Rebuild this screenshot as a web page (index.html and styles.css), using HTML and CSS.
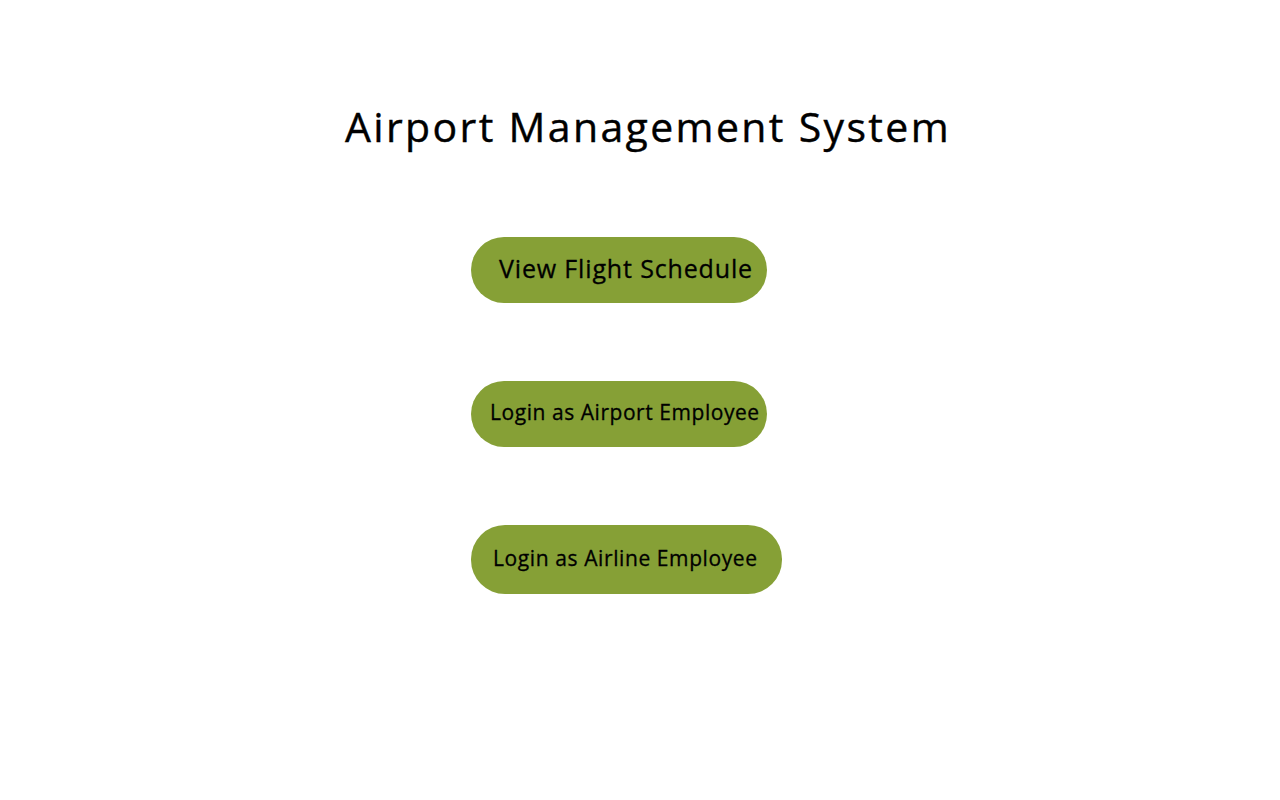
FILE: index.html
```html
<!DOCTYPE html>
<html lang="en">
<head>
<meta charset="utf-8">
<title>Airport Management System</title>
<link rel="stylesheet" href="styles.css">
</head>
<body>
<main class="page">
  <h1 class="title">Airport Management System</h1>
  <nav class="menu">
    <button class="btn btn-schedule">View Flight Schedule</button>
    <button class="btn btn-airport">Login as Airport Employee</button>
    <button class="btn btn-airline">Login as Airline Employee</button>
  </nav>
</main>
</body>
</html>
```

FILE: styles.css
```css
html, body {
  margin: 0;
  padding: 0;
  background: #ffffff;
}

body {
  font-family: "Open Sans", "DejaVu Sans", sans-serif;
  color: #000000;
}

.page {
  display: flex;
  flex-direction: column;
  padding-top: 95px;
}

.title {
  margin: 0;
  text-align: center;
  padding-left: 16px;
  font-size: 41px;
  font-weight: 400;
  letter-spacing: 2.35px;
  line-height: 62px;
  -webkit-text-stroke: 0.4px #000;
}

.menu {
  display: flex;
  flex-direction: column;
  align-items: flex-start;
  padding-left: 471px;
  padding-top: 80px;
  gap: 78px;
}

.btn {
  border: none;
  background: #86a036;
  color: #000000;
  font-family: inherit;
  font-weight: 400;
  border-radius: 34px;
  text-align: left;
  white-space: nowrap;
  cursor: pointer;
  box-sizing: border-box;
  -webkit-text-stroke: 0.3px #000;
}

.btn-schedule {
  width: 296px;
  height: 66px;
  padding: 0 0 5px 28px;
  font-size: 25px;
  letter-spacing: 0.85px;
}

.btn-airport {
  width: 296px;
  height: 66px;
  padding: 0 0 4px 19px;
  font-size: 21px;
  letter-spacing: 0.55px;
}

.btn-airline {
  width: 311px;
  height: 69px;
  padding: 0 0 4px 22px;
  font-size: 21px;
  letter-spacing: 0.6px;
}
```
